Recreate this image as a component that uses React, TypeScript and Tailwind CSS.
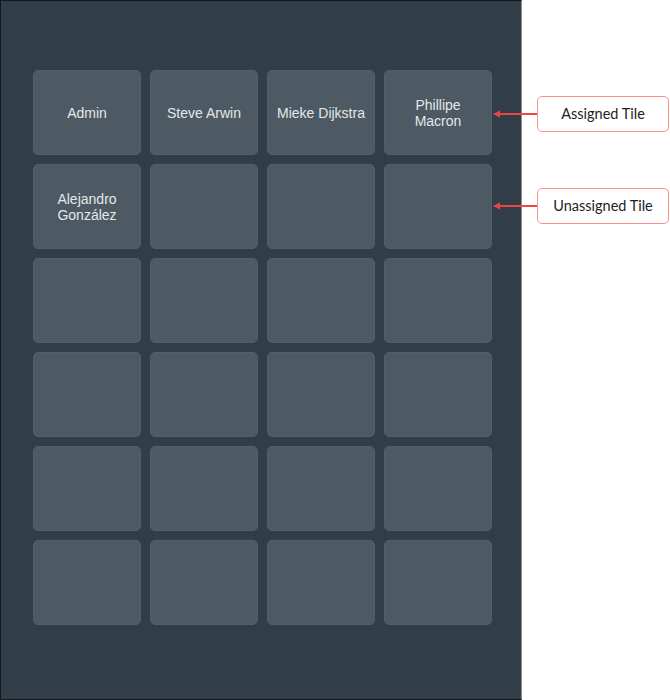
import React from 'react';

// Names whose tiles break onto two lines carry an explicit break
const NAMES = ['Admin', 'Steve Arwin', 'Mieke Dijkstra', 'Phillipe\nMacron', 'Alejandro\nGonzález'];
const TILE_COUNT = 24;

function Callout({ top, label }: { top: number; label: string }) {
  return (
    <div className="absolute left-[492px] flex items-center" style={{ top }}>
      {/* Arrow */}
      <svg width="45" height="10" viewBox="0 0 45 10" className="block">
        <line x1="6" y1="5" x2="45" y2="5" stroke="#ef4444" strokeWidth="2" />
        <polygon points="1,5 8,1.5 8,8.5" fill="#ef4444" />
      </svg>
      <div className="w-[132px] h-[36px] flex items-center justify-center rounded-[5px] border border-[#ff8f8f] bg-white text-[14.5px] text-[#222] font-['Lato',sans-serif]">
        {label}
      </div>
    </div>
  );
}

export default function App() {
  return (
    <div className="relative w-[670px] h-[700px] bg-white">
      {/* Panel */}
      <div className="w-[522px] h-[700px] bg-[#313d47] border border-[#111820] border-r-[#8a8f94] pt-[69px] pl-[32px]">
        <div className="grid grid-cols-[repeat(4,108px)] auto-rows-[85px] gap-[9px]">
          {Array.from({ length: TILE_COUNT }, (_, i) => (
            <div
              key={i}
              className="rounded-[5px] bg-[#4e5a63] border border-[#535f68] flex items-center justify-center px-1 text-center whitespace-pre-line text-[14px] leading-[16px] text-[#e4e7e9] font-['Liberation_Sans',Arial,sans-serif]"
            >
              {NAMES[i] ?? ''}
            </div>
          ))}
        </div>
      </div>

      {/* Annotations */}
      <Callout top={96} label="Assigned Tile" />
      <Callout top={188} label="Unassigned Tile" />
    </div>
  );
}
